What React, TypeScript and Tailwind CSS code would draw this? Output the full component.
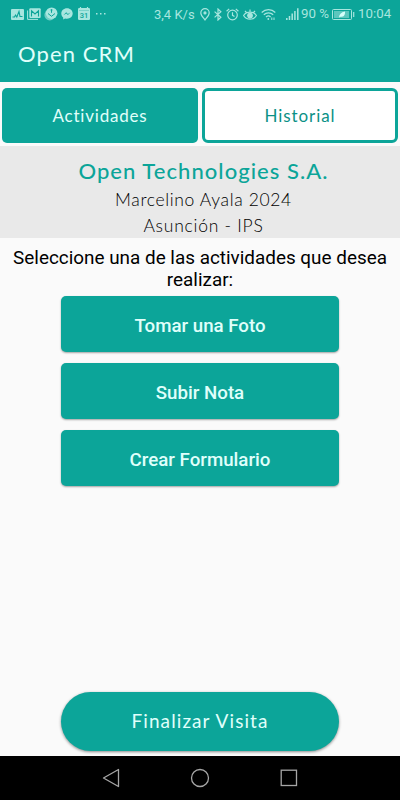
import type { ReactNode } from "react";

const ActivityIcon = () => (
  <svg width="13" height="11" viewBox="0 0 13 11" className="ml-[11px]">
    <rect width="13" height="11" rx="1" fill="#a8e6df" />
    <path d="M1.500 8h2l1-2 1.300 2L8 2.500 9 7.500h2.500" fill="none" stroke="#0ca599" strokeWidth="1.100" />
  </svg>
);

const MailIcon = () => (
  <svg width="14" height="12" viewBox="0 0 14 12" className="ml-[3px]">
    <path d="M.6 2.500v8.900H11" fill="none" stroke="#a8e6df" strokeWidth="1" />
    <rect x="2.300" y=".3" width="11.400" height="9.600" rx="1" fill="#a8e6df" />
    <path d="M4.500 8.500V2.800L8 6l3.500-3.200v5.700" fill="none" stroke="#0ca599" strokeWidth="1.100" />
  </svg>
);

const MissedIcon = () => (
  <svg width="14" height="14" viewBox="0 0 14 14" className="ml-[3px]">
    <circle cx="5.800" cy="8" r="5.400" fill="#71cdc5" />
    <circle cx="7.600" cy="6.200" r="5.800" fill="#a8e6df" />
    <path d="M4 6.500 7.500 9.300 11 6.500M7.500 2.300v3.500M6.500 3h2" fill="none" stroke="#0ca599" strokeWidth="1" />
  </svg>
);

const MessengerIcon = () => (
  <svg width="12" height="12" viewBox="0 0 12 12" className="ml-[3px]">
    <path d="M6 .3C2.700.3.3 2.600.3 5.600c0 1.600.7 3 1.900 3.900v2.100l1.900-1.100c.6.2 1.200.3 1.900.3 3.300 0 5.700-2.200 5.700-5.200S9.300.3 6 .3Z" fill="#a8e6df" />
    <path d="m2.400 7.200 2.800-2.900 1.700 1.600 2.800-1.700L6.900 7.100 5.300 5.600Z" fill="#0ca599" />
  </svg>
);

const CalendarIcon = () => (
  <svg width="12" height="13" viewBox="0 0 12 13" className="mb-[1px] ml-[5px]">
    <rect y="1" width="12" height="12" rx="1.200" fill="#a8e6df" />
    <path d="M2.500 0v2M9.500 0v2" stroke="#a8e6df" strokeWidth="1.200" />
    <path d="M1 3.500h10" stroke="#6fcdc4" strokeWidth=".8" />
    <text x="6" y="10.800" textAnchor="middle" fontSize="7.500" fontFamily="Roboto" fontWeight="500" fill="#0ca599">31</text>
  </svg>
);

const PinIcon = () => (
  <svg width="10" height="13" viewBox="0 0 10 13" fill="none" stroke="#a8e6df" strokeWidth="1.200" className="ml-[5px]">
    <path d="M5 12C3.500 9.800.8 7.300.8 4.900a4.200 4.200 0 0 1 8.400 0C9.200 7.300 6.500 9.800 5 12Z" />
    <circle cx="5" cy="4.900" r="1" fill="#a8e6df" />
  </svg>
);

const BluetoothIcon = () => (
  <svg width="8" height="13" viewBox="0 0 8 13" fill="none" stroke="#a8e6df" strokeWidth="1.200" className="ml-[4px]">
    <path d="m.6 3.600 6.300 5.600L4 12V1l2.900 2.700-6.300 5.700" />
  </svg>
);

const AlarmIcon = () => (
  <svg width="13" height="13" viewBox="0 0 13 13" fill="none" stroke="#a8e6df" strokeWidth="1.200" className="ml-[4px]">
    <circle cx="6.500" cy="7" r="4.800" />
    <path d="M6.500 4.300v3l2 1.300M.6 3.300 3.200.9M12.400 3.300 9.800.9" />
  </svg>
);

const EyeIcon = () => (
  <svg width="14" height="13" viewBox="0 0 14 13" fill="none" stroke="#a8e6df" strokeWidth="1.200" className="ml-[4px]">
    <path d="M.6 7.500C2 5.300 4.200 4.200 7 4.200s5 1.100 6.400 3.300C12 10 9.800 11.200 7 11.200S2 10 .6 7.500ZM7 1.500v2.700M2 2.800l1.800 2.200M12 2.800l-1.800 2.200" />
    <circle cx="7" cy="7.600" r="2.300" fill="#a8e6df" />
  </svg>
);

const WifiIcon = () => (
  <svg width="15" height="13" viewBox="0 0 15 13" fill="none" stroke="#a8e6df" strokeWidth="1.200" className="ml-[4px]">
    <path d="M.7 4.500C4.500.7 10.500.7 14.300 4.500M2.800 6.800c2.700-2.600 6.700-2.600 9.400 0M5 9c1.500-1.300 3.300-1.300 4.600 0" />
    <circle cx="7.300" cy="11" r=".9" fill="#a8e6df" stroke="none" />
    <path d="M10.800 12V9.500M13 9.500V12" strokeWidth="1" />
  </svg>
);

const SignalIcon = () => (
  <svg width="13" height="12" viewBox="0 0 13 12" className="ml-[10px]">
    <path d="M.8 12v-2M3.500 12V8M6.200 12V5.500M8.900 12V3M11.800 12V.3" stroke="#a8e6df" strokeWidth="1.500" />
  </svg>
);

const BatteryIcon = () => (
  <svg width="23" height="11" viewBox="0 0 23 11" className="ml-[2px]">
    <rect x=".5" y=".5" width="19" height="10" rx="1" fill="none" stroke="#a8e6df" />
    <rect x="2" y="2" width="15" height="7" fill="#5cc6bd" />
    <path d="M7 8.500c0-3 2-5.300 6-6 .3 4-1.500 5.500-4.500 5.300Z" fill="#d5fffa" />
    <path d="M21.700 3v5" stroke="#a8e6df" strokeWidth="1.200" />
  </svg>
);

const StatusBar = () => (
  <div className="flex h-[28px] items-center whitespace-nowrap font-[Roboto,sans-serif] text-[#a8e6df]">
    <ActivityIcon />
    <MailIcon />
    <MissedIcon />
    <MessengerIcon />
    <CalendarIcon />
    <svg width="10" height="2" viewBox="0 0 10 2" fill="#a8e6df" className="ml-[6px]">
      <path d="M0 0h1.500v1.500H0zM4 0h1.500v1.500H4zM8 0h1.500v1.500H8z" />
    </svg>
    <span className="ml-[48px] w-[41px] text-[13px] leading-none">3,4 K/s</span>
    <PinIcon />
    <BluetoothIcon />
    <AlarmIcon />
    <EyeIcon />
    <WifiIcon />
    <SignalIcon />
    <span className="ml-[2px] w-[29px] text-[13.3px] leading-none">90 %</span>
    <BatteryIcon />
    <span className="ml-[3px] text-[13.3px] leading-none">10:04</span>
  </div>
);

const ActionButton = ({ children }: { children: ReactNode }) => (
  <button
    type="button"
    className="h-[56px] w-[278px] rounded-[5px] bg-[#0ca599] pt-[4px] font-[Roboto,sans-serif] text-[18.7px] font-medium text-[#e0fffb] shadow-[0_1px_2px_rgba(0,0,0,0.35)]"
  >
    {children}
  </button>
);

const App = () => {
  return (
    <div className="flex h-[800px] w-[400px] flex-col overflow-hidden bg-[#fafafa] font-[Lato,sans-serif]">
      <header className="h-[82px] shrink-0 bg-[#0ca599]">
        <StatusBar />
        <h1 className="pl-[18px] pt-[11px] text-[22px] leading-[30px] tracking-[1.1px] text-[#e0fffb]">
          Open CRM
        </h1>
      </header>

      <div className="flex h-[64px] shrink-0 gap-[4px] px-[2px] pt-[6px]">
        <button type="button" className="h-[55px] w-[196px] rounded-[5px] bg-[#0ca599] text-[17px] tracking-[0.8px] text-[#e0fffb]">
          Actividades
        </button>
        <button type="button" className="h-[55px] w-[196px] rounded-[6px] border-[3px] border-[#0ca599] bg-white text-[17px] tracking-[0.9px] text-[#0b9186]">
          Historial
        </button>
      </div>

      <section className="flex h-[92px] shrink-0 flex-col items-center bg-[#e9e9e9] pl-[7px] pt-[11px] text-center text-black">
        <h2 className="text-[22px] font-medium leading-[28px] tracking-[1.05px] text-[#0ca599]">Open Technologies S.A.</h2>
        <p className="text-[17.5px] font-light leading-[30px] tracking-[0.65px]">Marcelino Ayala 2024</p>
        <p className="text-[17.5px] font-light leading-[22px] tracking-[0.75px]">Asunción - IPS</p>
      </section>

      <main className="flex flex-1 flex-col items-center">
        <p className="mt-[9px] whitespace-nowrap text-center font-[Roboto,sans-serif] text-[18.9px] leading-[22px] text-black">
          Seleccione una de las actividades que desea
          <br />
          realizar:
        </p>
        <div className="mt-[5px] flex flex-col gap-[11px]">
          <ActionButton>Tomar una Foto</ActionButton>
          <ActionButton>Subir Nota</ActionButton>
          <ActionButton>Crear Formulario</ActionButton>
        </div>
        <button
          type="button"
          className="mb-[5px] mt-auto h-[59px] w-[278px] rounded-full bg-[#0ca599] text-[19px] tracking-[1.1px] text-[#e0fffb] shadow-[0_1px_3px_rgba(0,0,0,0.45)]"
        >
          Finalizar Visita
        </button>
      </main>

      <nav className="flex h-[44px] shrink-0 items-center justify-center gap-[70px] bg-black">
        <svg width="18" height="20" viewBox="0 0 18 20" fill="none" stroke="#a6a6a6" strokeWidth="1.300" strokeLinejoin="round">
          <path d="M16.500 1.500v17L1.500 10Z" />
        </svg>
        <svg width="20" height="20" viewBox="0 0 20 20" fill="none" stroke="#a6a6a6" strokeWidth="1.300">
          <circle cx="10" cy="10" r="8.500" />
        </svg>
        <svg width="18" height="18" viewBox="0 0 18 18" fill="none" stroke="#a6a6a6" strokeWidth="1.300">
          <rect x="1.200" y="1.200" width="15.300" height="15.300" />
        </svg>
      </nav>
    </div>
  );
};

export default App;
